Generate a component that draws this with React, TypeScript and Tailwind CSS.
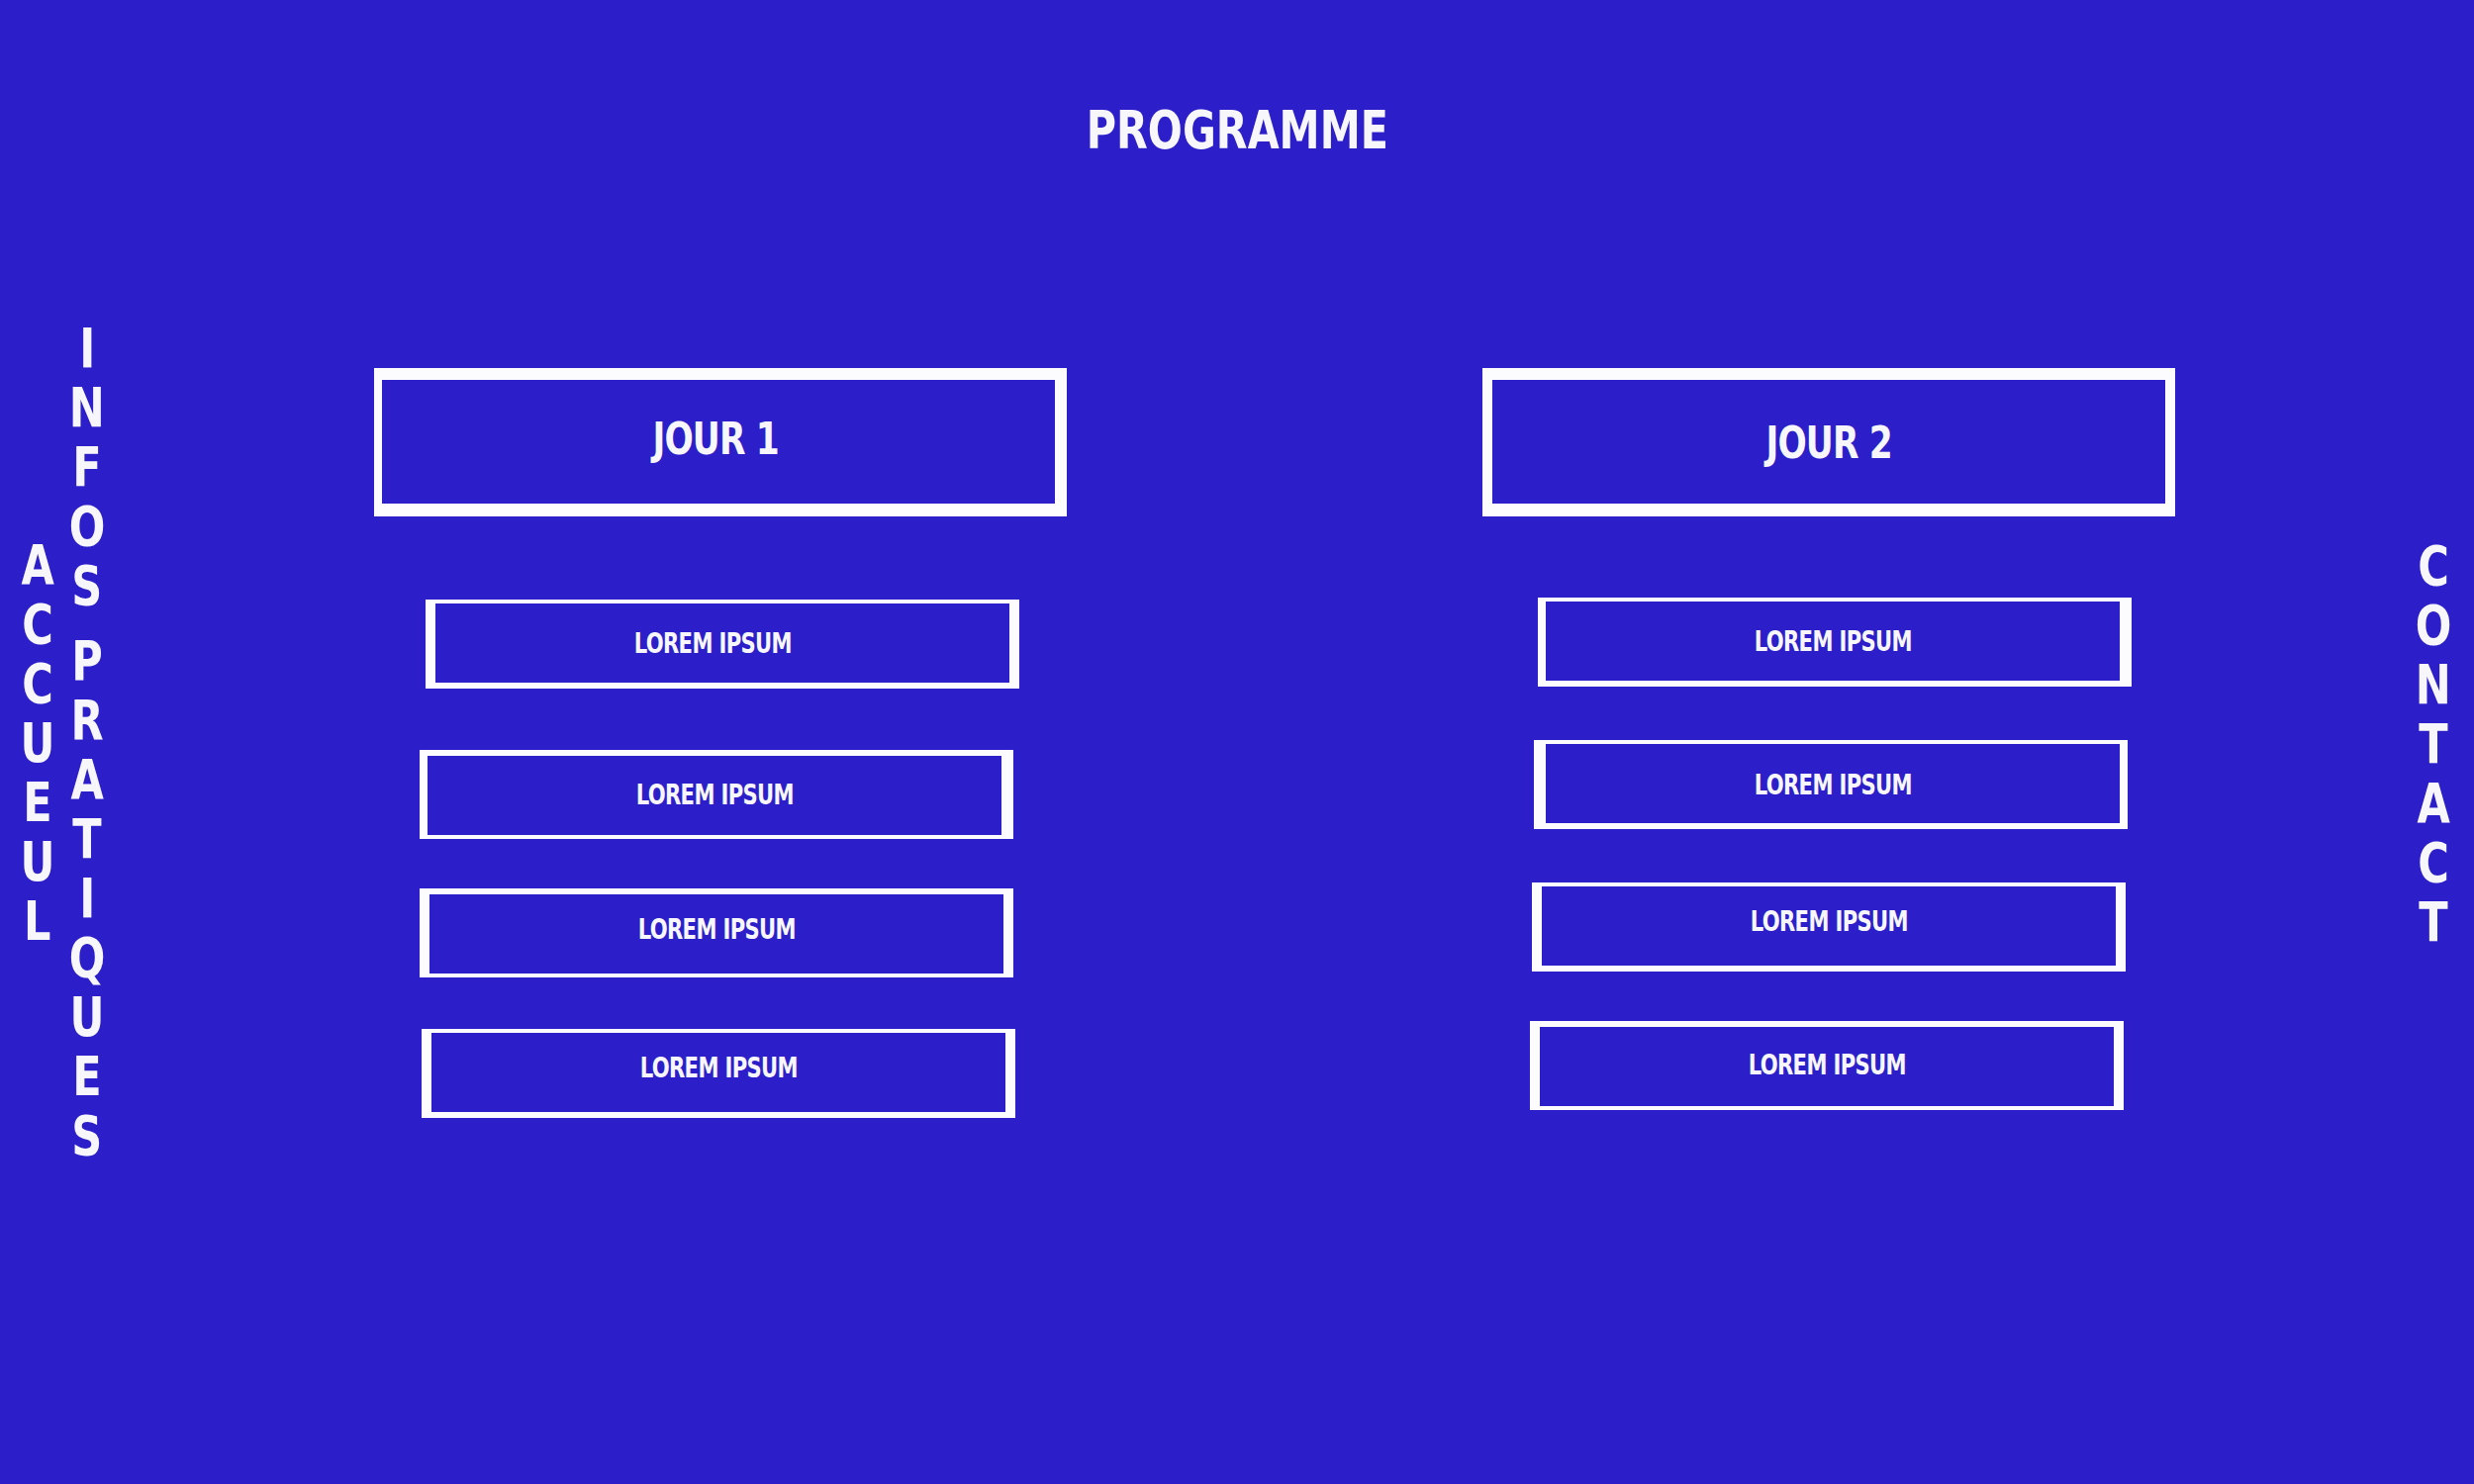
import React from "react";

const FONT = {
  fontFamily:
    '"Liberation Sans Narrow", "DejaVu Sans Condensed", "Liberation Sans", Arial, sans-serif',
};

function VWord({ letters, className }: { letters: string[]; className?: string }) {
  return (
    <div className={"flex flex-col items-center " + (className ?? "")}>
      {letters.map((l, i) =>
        l === " " ? (
          <div key={i} className="h-[16px]" />
        ) : (
          <div key={i} className="h-[60px] text-[55px] leading-[60px] font-bold scale-x-[0.87]">
            {l}
          </div>
        )
      )}
    </div>
  );
}

type Box = { cls: string; text?: string };

const leftBoxes: Box[] = [
  { cls: "mt-[84px] ml-[52px] border-t-[4px] border-r-[10px] border-b-[6px] border-l-[10px] pr-[20px]" },
  { cls: "mt-[62px] ml-[46px] border-t-[6px] border-r-[12px] border-b-[4px] border-l-[8px] pb-[2px]" },
  { cls: "mt-[50px] ml-[46px] border-t-[6px] border-r-[10px] border-b-[4px] border-l-[10px] pb-[10px]" },
  { cls: "mt-[52px] ml-[48px] border-t-[4px] border-r-[10px] border-b-[6px] border-l-[10px] pb-[9px]" },
];

const rightBoxes: Box[] = [
  { cls: "mt-[82px] ml-[56px] border-t-[4px] border-r-[12px] border-b-[6px] border-l-[8px]" },
  { cls: "mt-[54px] ml-[52px] border-t-[4px] border-r-[8px] border-b-[6px] border-l-[12px] pt-[2px]" },
  { cls: "mt-[54px] ml-[50px] border-t-[4px] border-r-[10px] border-b-[6px] border-l-[10px] pb-[9px]" },
  { cls: "mt-[50px] ml-[48px] border-t-[6px] border-r-[10px] border-b-[4px] border-l-[10px] pb-[3px]" },
];

function SmallBox({ cls }: Box) {
  return (
    <div
      className={
        "w-[600px] h-[90px] border-solid border-[#fcfcff] flex items-center justify-center " + cls
      }
    >
      <span className="inline-block text-[29px] leading-[29px] font-bold tracking-[-0.8px] scale-x-[0.81]">
        LOREM IPSUM
      </span>
    </div>
  );
}

export default function App() {
  return (
    <div
      className="w-[2500px] h-[1500px] bg-[#2c1ec8] text-[#f7f7fb] flex flex-col overflow-hidden"
      style={FONT}
    >
      <header className="h-[322px] pt-[105px] flex justify-center">
        <h1 className="inline-block text-[54px] leading-[54px] font-bold pl-[2px] scale-x-[0.85]">
          PROGRAMME
        </h1>
      </header>

      <div className="flex flex-row items-start">
        <nav className="flex flex-row items-start pl-[8px]">
          <VWord
            className="w-[60px] mt-[219px]"
            letters={["A", "C", "C", "U", "E", "U", "L"]}
          />
          <VWord
            className="w-[40px]"
            letters={["I", "N", "F", "O", "S", " ", "P", "R", "A", "T", "I", "Q", "U", "E", "S"]}
          />
        </nav>

        <main className="ml-[270px] flex flex-row gap-[420px]">
          <section className="w-[700px] flex flex-col items-start pt-[50px]">
            <div className="w-[700px] h-[150px] border-solid border-[#fcfcff] border-t-[12px] border-r-[12px] border-b-[13px] border-l-[8px] flex items-center justify-center pb-[6px] pr-[5px]">
              <span className="inline-block text-[44px] leading-[44px] font-bold tracking-[-1px] scale-x-[0.87]">
                JOUR 1
              </span>
            </div>
            {leftBoxes.map((b, i) => (
              <SmallBox key={i} cls={b.cls} />
            ))}
          </section>

          <section className="w-[700px] flex flex-col items-start pt-[50px]">
            <div className="w-[700px] h-[150px] border-solid border-[#fcfcff] border-t-[12px] border-r-[10px] border-b-[13px] border-l-[10px] flex items-center justify-center pt-[3px]">
              <span className="inline-block text-[44px] leading-[44px] font-bold tracking-[-1px] scale-x-[0.87]">
                JOUR 2
              </span>
            </div>
            {rightBoxes.map((b, i) => (
              <SmallBox key={i} cls={b.cls} />
            ))}
          </section>
        </main>

        <aside className="ml-[241px] mt-[220px]">
          <VWord className="w-[40px]" letters={["C", "O", "N", "T", "A", "C", "T"]} />
        </aside>
      </div>
    </div>
  );
}
